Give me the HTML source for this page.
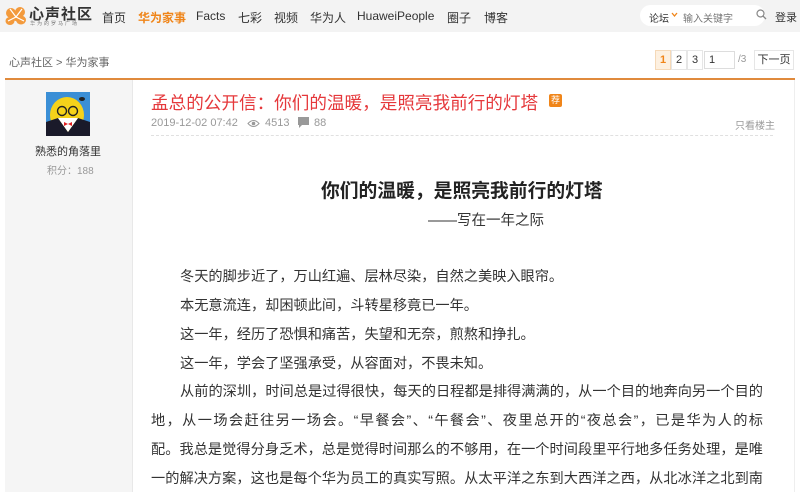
<!DOCTYPE html>
<html><head><meta charset="utf-8"><style>
*{margin:0;padding:0;box-sizing:border-box}
body{width:800px;height:492px;overflow:hidden;background:#fff;font-family:"Liberation Sans","Microsoft YaHei","Noto Sans CJK SC",sans-serif;color:#333;position:relative}
.a{position:absolute;white-space:nowrap}
.nav{position:absolute;left:0;top:0;width:800px;height:32px;background:#f3f3f3}
.nav span{position:absolute;top:9px;font-size:12px;color:#333}
.line{position:absolute;left:151px;width:612px;font-size:14.2px;color:#333;white-space:nowrap;text-align:justify;text-align-last:justify}
</style></head><body>
<div class="nav">
  <svg class="a" style="left:5px;top:6px" width="22" height="20" viewBox="0 0 22 20"><g fill="#f39a3c"><ellipse cx="6" cy="7" rx="5" ry="5"/><ellipse cx="15" cy="6" rx="5" ry="5"/><ellipse cx="5" cy="15" rx="4.5" ry="4"/><ellipse cx="16" cy="14" rx="5" ry="4.5"/><ellipse cx="11" cy="11" rx="4" ry="4"/></g><path d="M11 11 L5 3 M11 11 L17 3 M11 11 L3 15 M11 11 L19 15" stroke="#fff" stroke-width="1.2"/></svg>
  <div class="a" style="left:29px;top:3px;font-size:15px;font-weight:bold;color:#333;letter-spacing:1px">心声社区</div>
  <div class="a" style="left:30px;top:20px;font-size:5px;color:#777;letter-spacing:2px">华为的罗马广场</div>
  <span style="left:102px">首页</span>
  <span style="left:138px;color:#f08519;font-weight:bold">华为家事</span>
  <span style="left:196px">Facts</span>
  <span style="left:238px">七彩</span>
  <span style="left:274px">视频</span>
  <span style="left:310px">华为人</span>
  <span style="left:357px">HuaweiPeople</span>
  <span style="left:447px">圈子</span>
  <span style="left:484px">博客</span>
  <div class="a" style="left:640px;top:5px;width:125px;height:21px;background:#fff;border-radius:11px"></div>
  <span style="left:649px;font-size:10px;top:10px">论坛</span>
  <svg class="a" style="left:671px;top:12px" width="7" height="6"><path d="M1 1 L3.5 4 L6 1" stroke="#f08519" stroke-width="1.3" fill="none"/></svg>
  <span style="left:683px;font-size:10px;top:10px;color:#777">输入关键字</span>
  <svg class="a" style="left:756px;top:9px" width="11" height="11"><circle cx="4.5" cy="4.5" r="3.5" stroke="#888" stroke-width="1.2" fill="none"/><path d="M7 7 L10 10" stroke="#888" stroke-width="1.3"/></svg>
  <span style="left:775px;font-size:11px">登录</span>
</div>
<div class="a" style="left:9px;top:54px;font-size:11px;color:#666">心声社区 &gt; 华为家事</div>
<div class="a" style="left:655px;top:50px;width:16px;height:20px;border:1px solid #f5d9b8;background:#fdf0e0;color:#f08519;font-size:11px;font-weight:bold;text-align:center;line-height:18px">1</div>
<div class="a" style="left:671px;top:50px;width:16px;height:20px;border:1px solid #e6e6e6;font-size:11px;text-align:center;line-height:18px">2</div>
<div class="a" style="left:687px;top:50px;width:16px;height:20px;border:1px solid #e6e6e6;font-size:11px;text-align:center;line-height:18px">3</div>
<div class="a" style="left:704px;top:51px;width:31px;height:18px;border:1px solid #ddd;font-size:11px;padding-left:4px;line-height:16px">1</div>
<div class="a" style="left:738px;top:54px;font-size:10px;color:#999">/3</div>
<div class="a" style="left:754px;top:50px;width:40px;height:20px;border:1px solid #e6e6e6;font-size:11px;text-align:center;line-height:18px">下一页</div>
<div class="a" style="left:5px;top:78px;width:790px;height:2px;background:#e08a3c"></div>
<div class="a" style="left:5px;top:80px;width:128px;height:412px;background:#f5f5f5;border-right:1px solid #e8e8e8"></div>
<div class="a" style="left:794px;top:80px;width:1px;height:412px;background:#eee"></div>
<svg class="a" style="left:46px;top:92px" width="44" height="44" viewBox="0 0 44 44"><rect width="44" height="44" fill="#3b8fd6"/><ellipse cx="21" cy="23" rx="17" ry="18" fill="#f5d21a"/><path d="M0 44 L0 30 Q6 28 12 26 L22 40 L32 26 Q38 28 44 30 L44 44Z" fill="#1a1a2a"/><path d="M12 26 L22 40 L32 26 Z" fill="#fff"/><circle cx="16" cy="19" r="4.5" fill="none" stroke="#222" stroke-width="1.4"/><circle cx="27" cy="19" r="4.5" fill="none" stroke="#222" stroke-width="1.4"/><path d="M18 30 L22 32 L26 30 L26 34 L22 32 L18 34Z" fill="#e02020"/><ellipse cx="36" cy="7" rx="3" ry="2" fill="#222"/></svg>
<div class="a" style="left:35px;top:143px;font-size:11px;color:#333">熟悉的角落里</div>
<div class="a" style="left:47px;top:162px;font-size:10px;color:#999">积分：188</div>
<div class="a" style="left:151px;top:90px;font-size:17.6px;color:#e5383b">孟总的公开信：你们的温暖，是照亮我前行的灯塔</div>
<div class="a" style="left:549px;top:94px;width:13px;height:13px;background:#f08519;border-radius:2px;color:#fff;font-size:9px;text-align:center;line-height:13px">荐</div>
<div class="a" style="left:151px;top:117px;font-size:11px;color:#999">2019-12-02 07:42</div>
<svg class="a" style="left:247px;top:119px" width="13" height="9"><path d="M1 4.5 Q6.5 -1.5 12 4.5 Q6.5 10.5 1 4.5Z" fill="none" stroke="#999"/><circle cx="6.5" cy="4.5" r="1.8" fill="#999"/></svg>
<div class="a" style="left:265px;top:117px;font-size:11px;color:#999">4513</div>
<svg class="a" style="left:298px;top:117px" width="11" height="12"><path d="M0 0 H11 V8 H4 L1 11 V8 H0Z" fill="#999"/></svg>
<div class="a" style="left:314px;top:117px;font-size:11px;color:#999">88</div>
<div class="a" style="left:735px;top:117px;font-size:10px;color:#999">只看楼主</div>
<div class="a" style="left:151px;top:135px;width:622px;border-top:1px dashed #e0e0e0"></div>
<div class="a" style="left:321px;top:176px;font-size:18.8px;font-weight:bold;color:#222">你们的温暖，是照亮我前行的灯塔</div>
<div class="a" style="left:428px;top:209px;font-size:14.5px;color:#333">——写在一年之际</div>
<div class="a" style="left:180px;top:266px;font-size:14.2px">冬天的脚步近了，万山红遍、层林尽染，自然之美映入眼帘。</div>
<div class="a" style="left:180px;top:295px;font-size:14.2px">本无意流连，却困顿此间，斗转星移竟已一年。</div>
<div class="a" style="left:180px;top:324px;font-size:14.2px">这一年，经历了恐惧和痛苦，失望和无奈，煎熬和挣扎。</div>
<div class="a" style="left:180px;top:353px;font-size:14.2px">这一年，学会了坚强承受，从容面对，不畏未知。</div>
<div class="line" style="left:180px;width:583px;top:381px">从前的深圳，时间总是过得很快，每天的日程都是排得满满的，从一个目的地奔向另一个目的</div>
<div class="line" style="top:410px">地，从一场会赶往另一场会。“早餐会”、“午餐会”、夜里总开的“夜总会”，已是华为人的标</div>
<div class="line" style="top:439px">配。我总是觉得分身乏术，总是觉得时间那么的不够用，在一个时间段里平行地多任务处理，是唯</div>
<div class="line" style="top:468px">一的解决方案，这也是每个华为员工的真实写照。从太平洋之东到大西洋之西，从北冰洋之北到南</div>
</body></html>
